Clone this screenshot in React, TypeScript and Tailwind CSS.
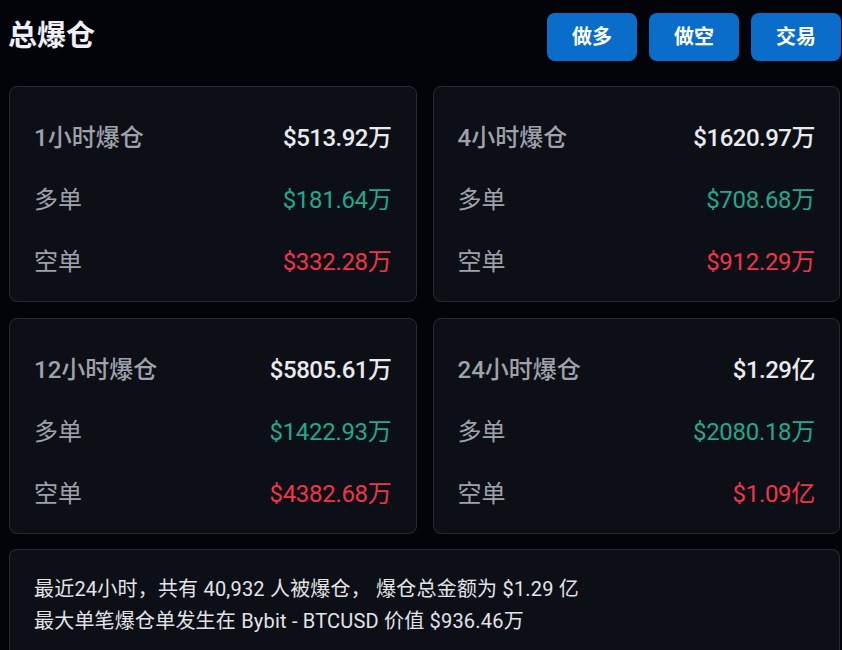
const font = { fontFamily: 'Roboto, "Noto Sans CJK SC", sans-serif' };

type Stat = {
    title: string;
    total: string;
    long: string;
    short: string;
};

const stats: Stat[] = [
    { title: "1小时爆仓", total: "$513.92万", long: "$181.64万", short: "$332.28万" },
    { title: "4小时爆仓", total: "$1620.97万", long: "$708.68万", short: "$912.29万" },
    { title: "12小时爆仓", total: "$5805.61万", long: "$1422.93万", short: "$4382.68万" },
    { title: "24小时爆仓", total: "$1.29亿", long: "$2080.18万", short: "$1.09亿" },
];

const StatCard = ({ stat }: { stat: Stat }) => {
    return (
        <div className="rounded-lg border border-[#272a33] bg-[#0d0f16] px-6 pt-[20px] pb-[8px]">
            <div className="flex h-[62px] items-center justify-between">
                <span className="text-[24px] font-medium text-[#9ea2aa]">{stat.title}</span>
                <span className="text-[24px] font-medium tracking-[-0.5px] text-[#e8eaee]">{stat.total}</span>
            </div>
            <div className="flex h-[62px] items-center justify-between">
                <span className="text-[24px] text-[#9ea2aa]">多单</span>
                <span className="text-[24px] tracking-[-0.3px] text-[#20a98b]">{stat.long}</span>
            </div>
            <div className="flex h-[62px] items-center justify-between">
                <span className="text-[24px] text-[#9ea2aa]">空单</span>
                <span className="text-[24px] tracking-[-0.3px] text-[#f1344a]">{stat.short}</span>
            </div>
        </div>
    );
};

const App = () => {
    return (
        <div className="min-h-[650px] bg-[#03040a] pl-[9px] pr-[2px] pt-[13px]" style={font}>
            <div className="mb-[25px] flex h-[48px] items-center justify-between mr-[-1px]">
                <h1 className="-ml-[1px] text-[29px] font-bold text-[#eef0f3]">总爆仓</h1>
                <div className="flex gap-3">
                    {["做多", "做空", "交易"].map((label) => (
                        <button
                            key={label}
                            className="h-[48px] w-[90px] rounded-lg bg-[#0b6dca] text-[20px] font-bold text-white"
                        >
                            {label}
                        </button>
                    ))}
                </div>
            </div>

            <div className="grid grid-cols-2 gap-4">
                {stats.map((s) => (
                    <StatCard key={s.title} stat={s} />
                ))}
            </div>

            <div className="mt-[15px] h-[120px] rounded-t-lg border border-b-0 border-[#272a33] bg-[#0d0f16] px-6 pt-[23px]">
                <p className="text-[20px] leading-[32px] tracking-[0.2px] text-[#e2e4e8]">
                    最近24小时，共有 40,932 人被爆仓， 爆仓总金额为 $1.29 亿
                </p>
                <p className="text-[20px] leading-[32px] tracking-[0.2px] text-[#e2e4e8]">
                    最大单笔爆仓单发生在 Bybit - BTCUSD 价值 $936.46万
                </p>
            </div>
        </div>
    );
};

export default App;
